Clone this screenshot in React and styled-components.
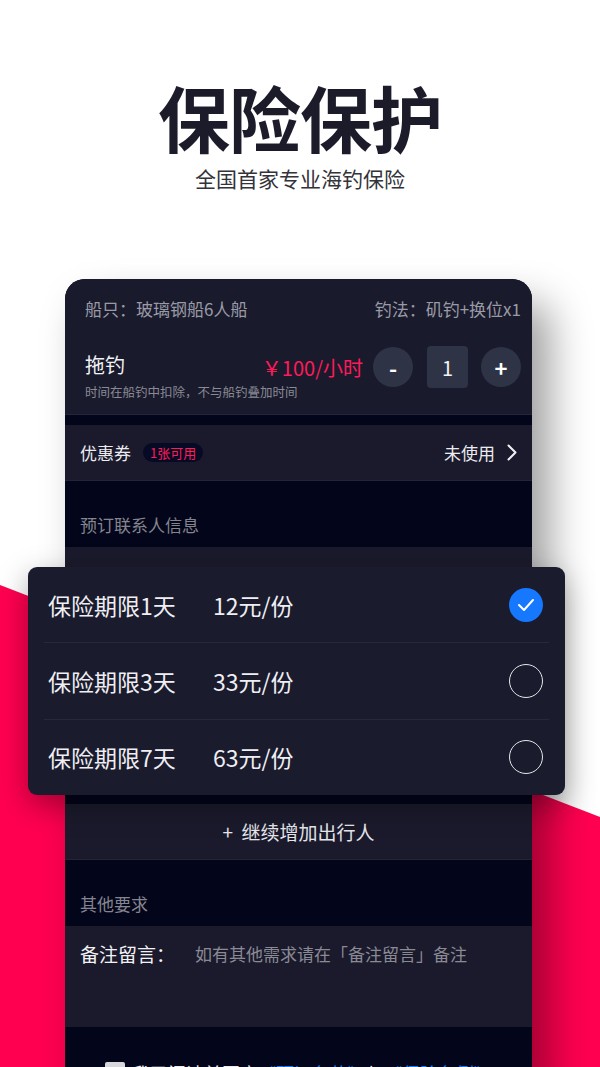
import React from 'react'
import styled, { createGlobalStyle } from 'styled-components'

const Global = createGlobalStyle`
  body{
    margin:0;
    font-family:"Noto Sans CJK SC","Noto Sans",sans-serif;
  }
`

const plans = [
  { days: 1, price: 12, checked: true },
  { days: 3, price: 33 },
  { days: 7, price: 63 },
]

const Check = () => (
  <svg width="18" height="14" viewBox="0 0 18 14">
    <polyline points="2,7 7,12 16,2" fill="none" stroke="#fff" strokeWidth="2" strokeLinecap="round" strokeLinejoin="round" />
  </svg>
)

const Chevron = () => (
  <svg width="10" height="17" viewBox="0 0 10 17">
    <polyline points="1.5,1.5 8.5,8.5 1.5,15.5" fill="none" stroke="#f0f0f4" strokeWidth="2" strokeLinecap="round" strokeLinejoin="round" />
  </svg>
)

const App = () => {
  return (
    <>
      <Global />
      <Page>
        <RedBand />
        <Header>
          <Title>保险保护</Title>
          <Subtitle>全国首家专业海钓保险</Subtitle>
        </Header>

        <Card>
          <TopSection>
            <InfoRow>
              <span>船只：玻璃钢船6人船</span>
              <span>钓法：矶钓+换位x1</span>
            </InfoRow>
            <TowRow>
              <TowText>
                <TowTitle>拖钓</TowTitle>
                <TowNote>时间在船钓中扣除，不与船钓叠加时间</TowNote>
              </TowText>
              <Controls>
                <Price>￥100/小时</Price>
                <RoundBtn>-</RoundBtn>
                <Count>1</Count>
                <RoundBtn>+</RoundBtn>
              </Controls>
            </TowRow>
          </TopSection>
          <Band />
          <LineRow>
            <Label>
              优惠券
              <Badge>1张可用</Badge>
            </Label>
            <Label>
              未使用
              <Chevron />
            </Label>
          </LineRow>
          <SectionTitle>预订联系人信息</SectionTitle>
          <Contact>
            <ContactRow>
              <Label>联 系 人：</Label>
              <Hint>请填写联系人姓名</Hint>
            </ContactRow>
            <ContactRow>
              <Label>手机号码：</Label>
              <Hint>请填写联系人手机号</Hint>
            </ContactRow>
          </Contact>
          <Band />
          <AddRow>+&nbsp;&nbsp;继续增加出行人</AddRow>
          <SectionTitle>其他要求</SectionTitle>
          <NoteSection>
            <NoteLabel>备注留言：</NoteLabel>
            <Hint>如有其他需求请在「备注留言」备注</Hint>
          </NoteSection>
          <Agree>
            <Box />
            <span>
              我已阅读并同意<Link>《预订条款》</Link>与<Link>《保险条例》</Link>
            </span>
          </Agree>
        </Card>

        <Popup>
          {plans.map((p) => (
            <PlanRow key={p.days}>
              <PlanName>保险期限{p.days}天</PlanName>
              <PlanPrice>{p.price}元/份</PlanPrice>
              <Radio $checked={p.checked}>{p.checked && <Check />}</Radio>
            </PlanRow>
          ))}
        </Popup>
      </Page>
    </>
  )
}

export default App

const Page = styled.div`
position:relative;
width:600px;
height:1067px;
overflow:hidden;
background:#fff;
`

const RedBand = styled.div`
position:absolute;
inset:0;
background:#ff0050;
clip-path:polygon(0 585px, 600px 817px, 600px 1067px, 0 1067px);
`

const Header = styled.div`
position:relative;
display:flex;
flex-direction:column;
align-items:center;
padding-top:80px;
`

const Title = styled.h1`
margin:0;
font-size:72px;
line-height:72px;
font-weight:700;
color:#1b1b2a;
letter-spacing:-1px;
`

const Subtitle = styled.div`
margin-top:13px;
font-size:21px;
line-height:26px;
color:#333339;
`

const Card = styled.div`
position:relative;
margin:88px 0 0 65px;
width:467px;
height:800px;
background:#03051a;
border-radius:20px 20px 0 0;
overflow:hidden;
box-shadow:18px 24px 40px rgba(0,0,0,0.38);
`

const TopSection = styled.div`
background:#191a2c;
padding:0 11px 0 20px;
border-bottom:1px solid #25263a;
`

const InfoRow = styled.div`
height:58px;
display:flex;
align-items:center;
justify-content:space-between;
font-size:17px;
color:#9a9aa6;
white-space:nowrap;
`

const TowRow = styled.div`
height:77px;
display:flex;
justify-content:space-between;
`

const TowText = styled.div`
flex:1;
min-width:0;
padding-top:14px;
white-space:nowrap;
`

const TowTitle = styled.div`
font-size:20px;
line-height:28px;
color:#f2f2f5;
`

const TowNote = styled.div`
margin-top:5px;
font-size:12.5px;
line-height:16px;
color:#8a8a95;
`

const Controls = styled.div`
margin-top:9px;
height:42px;
display:flex;
align-items:center;
flex-shrink:0;
`

const Price = styled.span`
font-size:20px;
color:#ff1a5a;
margin-right:10px;
white-space:nowrap;
`

const RoundBtn = styled.div`
width:40px;
height:40px;
border-radius:50%;
background:#2e3345;
color:#fff;
font-size:22px;
font-weight:700;
display:flex;
align-items:center;
justify-content:center;
`

const Count = styled.div`
width:41px;
height:42px;
margin:0 13px 0 14px;
border-radius:4px;
background:#2e3345;
color:#f2f2f5;
font-size:20px;
display:flex;
align-items:center;
justify-content:center;
`

const Band = styled.div`
height:10px;
`

const LineRow = styled.div`
height:55px;
padding:0 15px;
background:#1a1a2c;
display:flex;
align-items:center;
justify-content:space-between;
border-bottom:1px solid #232436;
`

const Label = styled.span`
display:flex;
align-items:center;
gap:12px;
font-size:17px;
color:#ececf0;
white-space:nowrap;
`

const Badge = styled.span`
height:19px;
padding:0 7px;
border-radius:10px;
background:#070a24;
color:#ff1a5a;
font-size:13px;
line-height:19px;
`

const SectionTitle = styled.div`
height:66px;
box-sizing:border-box;
padding:32px 0 0 15px;
font-size:17px;
line-height:24px;
color:#85858f;
`

const Contact = styled.div`
height:247px;
background:#1a1a2c;
`

const ContactRow = styled.div`
height:55px;
padding:0 15px;
display:flex;
align-items:center;
gap:30px;
border-bottom:1px solid #232436;
`

const Hint = styled.span`
font-size:17px;
color:#8a8a95;
white-space:nowrap;
`

const AddRow = styled.div`
height:55px;
background:#1a1a2c;
display:flex;
align-items:center;
justify-content:center;
font-size:19px;
color:#e6e6ea;
border-bottom:1px solid #232436;
`

const NoteSection = styled.div`
height:101px;
box-sizing:border-box;
padding:14px 15px 0;
background:#1a1a2c;
display:flex;
align-items:flex-start;
gap:20px;
line-height:28px;
`

const NoteLabel = styled.span`
font-size:19px;
color:#f2f2f5;
`

const Agree = styled.div`
padding-top:35px;
display:flex;
justify-content:center;
align-items:flex-start;
gap:7px;
font-size:18px;
line-height:22px;
color:#ececf0;
`

const Box = styled.div`
width:20px;
height:20px;
border-radius:2px;
background:#d8d8dc;
`

const Link = styled.span`
color:#1c7cf0;
`

const Popup = styled.div`
position:absolute;
top:567px;
left:28px;
width:537px;
height:228px;
border-radius:9px;
background:#1a1b2d;
box-shadow:0 10px 30px rgba(0,0,0,0.35);
display:flex;
flex-direction:column;
`

const PlanRow = styled.div`
height:76px;
margin:0 16px;
padding:0 6px 0 4px;
display:flex;
align-items:center;
color:#efeff3;
font-size:23px;
& + &{
  border-top:1px solid #27283a;
}
`

const PlanName = styled.span`
width:165px;
`

const PlanPrice = styled.span`
flex:1;
`

const Radio = styled.div`
width:34px;
height:34px;
box-sizing:border-box;
border-radius:50%;
border:${p => p.$checked ? 'none' : '1.6px solid #e6e6ea'};
background:${p => p.$checked ? '#1677ff' : 'transparent'};
display:flex;
align-items:center;
justify-content:center;
`
